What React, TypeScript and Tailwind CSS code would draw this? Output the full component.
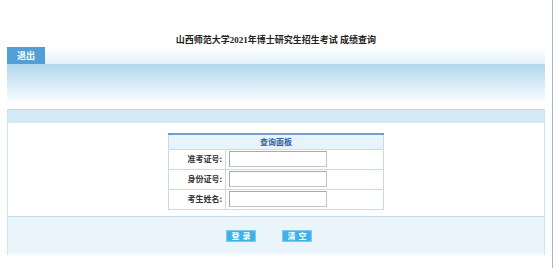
import React from "react";

const cjk = { fontFamily: '"Liberation Serif", "Noto Sans CJK SC", serif' };
const cjkSans = { fontFamily: '"Noto Sans CJK SC", sans-serif' };

function Row({ label }: { label: string }) {
  return (
    <tr className="h-[19px]">
      <td className="w-[57px] border border-[#c6dbf2] pr-[3px] text-right text-[8px] font-bold leading-none text-[#333]" style={cjkSans}>
        {label}
      </td>
      <td className="border border-[#c6dbf2] pl-[3px]">
        <div className="flex h-[19px] items-center">
          <input className="h-[16px] w-[98px] border border-[#c4c4c4] border-l-[#a8a8a8] border-t-[#a8a8a8] bg-white outline-none" />
        </div>
      </td>
    </tr>
  );
}

export default function App() {
  return (
    <div className="flex h-[268px] w-[554px] bg-white">
      <div className="flex w-[552px] flex-col">
        <div className="flex h-[47px] items-end justify-center pb-[1px]">
          <span className="text-[9px] font-bold leading-[12px] text-[#222]" style={cjk}>
            山西师范大学2021年博士研究生招生考试 成绩查询
          </span>
        </div>
        <div className="ml-[7px] w-[538px]">
          <div className="flex h-[17px]">
            <div className="flex w-[38px] items-center justify-center bg-[#519fd6] text-[9px] font-bold leading-none text-white" style={cjkSans}>
              退出
            </div>
            <div className="flex-1 bg-gradient-to-b from-white to-[#e2f2fb]" />
          </div>
          <div className="h-[38px] bg-gradient-to-b from-[#b0d8ee] to-[#fbfdff]" />
          <div className="h-[7px]" />
          <div className="border-x border-[#cfe4f3]">
            <div className="h-[14px] border-t border-[#bcd9ee] bg-[#d3e9f6]" />
            <div className="flex h-[93px] justify-center pt-[10px]">
              <table className="h-[72px] w-[216px] self-start border-collapse border-t-2 border-t-[#6f9fd3]">
                <tbody>
                  <tr className="h-[15px]">
                    <td colSpan={2} className="border border-t-0 border-[#c6dbf2] bg-[#e8f3fd] text-center text-[8px] font-bold leading-none text-[#2d5f9c]" style={cjkSans}>
                      查询面板
                    </td>
                  </tr>
                  <Row label="准考证号:" />
                  <Row label="身份证号:" />
                  <Row label="考生姓名:" />
                </tbody>
              </table>
            </div>
            <div className="flex h-[37px] items-center justify-center gap-[26px] border-t border-[#c4ddf1] bg-[#eaf4fb] pr-[14px] pt-[2px]">
              <button className="flex h-[12px] w-[30px] items-center justify-center border border-[#7fcaf0] bg-[#3db1e8] pl-[3px] text-[8px] font-bold leading-none tracking-[3px] text-white" style={cjkSans}>
                登录
              </button>
              <button className="flex h-[12px] w-[30px] items-center justify-center border border-[#7fcaf0] bg-[#3db1e8] pl-[3px] text-[8px] font-bold leading-none tracking-[3px] text-white" style={cjkSans}>
                清空
              </button>
            </div>
          </div>
          <div className="h-[2px] border-x border-[#cfe4f3] bg-[#f3f8fc]" />
        </div>
      </div>
      <div className="h-full w-px bg-[#9fb7d9]" />
      <div className="h-full w-px bg-white" />
    </div>
  );
}
